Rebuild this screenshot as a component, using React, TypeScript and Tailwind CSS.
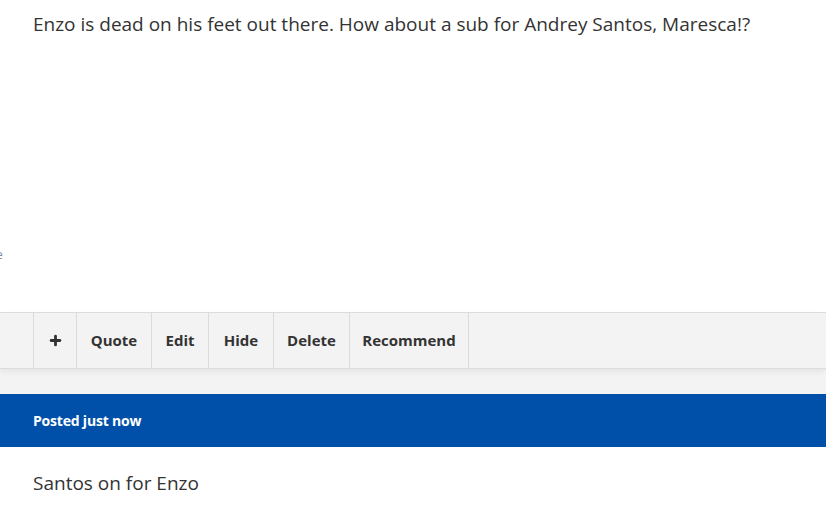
import { Plus } from 'lucide-react';

const actions = [
    { label: 'Quote', w: 'w-[75px]' },
    { label: 'Edit', w: 'w-[57px]' },
    { label: 'Hide', w: 'w-[65px]' },
    { label: 'Delete', w: 'w-[76px]' },
    { label: 'Recommend', w: 'w-[119px]' },
];

const App = () => {
    return (
        <div className="w-[826px] h-[512px] overflow-hidden bg-white text-[#333] font-['Segoe_UI','Open_Sans',sans-serif]">
            {/* Post body */}
            <div className="h-[312px] relative">
                <p className="pl-[33px] pt-[11px] text-[19px] leading-[26px]">
                    Enzo is dead on his feet out there. How about a sub for Andrey Santos, Maresca!?
                </p>
                <span className="absolute left-[-4px] top-[246px] text-[12px] text-[#7d8aa3]">e</span>
            </div>

            {/* Action bar */}
            <div className="h-[82px] bg-[#f3f3f3]">
                <div className="h-[57px] flex border-y border-[#dcdcdc] shadow-[0_3px_6px_rgba(0,0,0,0.06)] text-[15px] font-bold text-[#333]">
                    <div className="w-[34px] border-r border-[#dcdcdc]" />
                    <button className="w-[43px] flex items-center justify-center border-r border-[#dcdcdc]">
                        <Plus className="w-[15px] h-[15px]" strokeWidth={4.5} />
                    </button>
                    {actions.map((a) => (
                        <button key={a.label} className={`${a.w} flex items-center justify-center border-r border-[#dcdcdc]`}>
                            {a.label}
                        </button>
                    ))}
                </div>
            </div>

            {/* Next post header */}
            <div className="h-[53px] bg-[#0050aa] flex items-center pl-[33px]">
                <span className="text-white font-bold text-[14px] tracking-[-0.2px]">Posted just now</span>
            </div>
            <p className="pl-[33px] pt-[23px] text-[19px] leading-[26px]">Santos on for Enzo</p>
        </div>
    );
};

export default App;
